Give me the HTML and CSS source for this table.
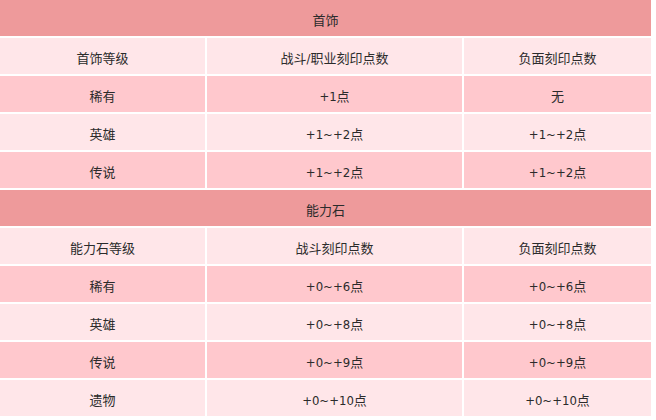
FILE: index.html
```html
<!DOCTYPE html>
<html lang="zh">
<head>
<meta charset="utf-8">
<link rel="stylesheet" href="styles.css">
</head>
<body>
<div class="table">
  <div class="cell section">首饰</div>
  <div class="cell light">首饰等级</div>
  <div class="cell light">战斗/职业刻印点数</div>
  <div class="cell light">负面刻印点数</div>
  <div class="cell pink">稀有</div>
  <div class="cell pink">+1点</div>
  <div class="cell pink">无</div>
  <div class="cell light">英雄</div>
  <div class="cell light">+1~+2点</div>
  <div class="cell light">+1~+2点</div>
  <div class="cell pink">传说</div>
  <div class="cell pink">+1~+2点</div>
  <div class="cell pink">+1~+2点</div>

  <div class="cell section">能力石</div>
  <div class="cell light">能力石等级</div>
  <div class="cell light">战斗刻印点数</div>
  <div class="cell light">负面刻印点数</div>
  <div class="cell pink">稀有</div>
  <div class="cell pink">+0~+6点</div>
  <div class="cell pink">+0~+6点</div>
  <div class="cell light">英雄</div>
  <div class="cell light">+0~+8点</div>
  <div class="cell light">+0~+8点</div>
  <div class="cell pink">传说</div>
  <div class="cell pink">+0~+9点</div>
  <div class="cell pink">+0~+9点</div>
  <div class="cell light">遗物</div>
  <div class="cell light">+0~+10点</div>
  <div class="cell light">+0~+10点</div>
</div>
</body>
</html>
```
FILE: styles.css
```css
html, body {
  margin: 0;
  padding: 0;
  background: #ffffff;
}

.table {
  display: grid;
  grid-template-columns: 205px 255px 187px;
  grid-auto-rows: 36px;
  gap: 2px;
  width: 651px;
  font-family: "DejaVu Sans Condensed", "Noto Sans CJK SC", sans-serif;
  font-size: 13px;
  color: #2b2b2b;
}

.cell {
  display: flex;
  align-items: center;
  justify-content: center;
  padding-top: 3px;
  box-sizing: border-box;
}

.section {
  grid-column: 1 / -1;
  background: #ee9a9b;
}

.light {
  background: #ffe6e9;
}

.pink {
  background: #ffc8cd;
}
```
